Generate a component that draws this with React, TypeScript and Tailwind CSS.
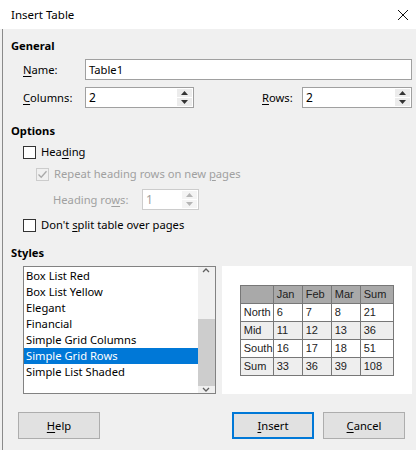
import React from "react"

const font = { fontFamily: '"Noto Sans", "Open Sans", sans-serif' }

function U({ children }: { children: React.ReactNode }) {
  return <span className="underline underline-offset-2">{children}</span>
}

function Arrow({ up, color }: { up?: boolean; color: string }) {
  return (
    <svg width="7" height="4" viewBox="0 0 7 4">
      <path d={up ? "M0 4 L3.5 0 L7 4 Z" : "M0 0 L3.5 4 L7 0 Z"} fill={color} />
    </svg>
  )
}

function Spin({ value, width, disabled }: { value: string; width: string; disabled?: boolean }) {
  const btn = disabled ? "bg-[#f4f4f4]" : "bg-[#ececec]"
  const c = disabled ? "#b5b5b5" : "#333"
  return (
    <div className={`flex h-[21px] items-stretch border bg-white ${disabled ? "border-[#cccccc]" : "border-[#a0a0a0]"} ${width}`}>
      <div className={`flex-1 pl-[3px] text-[12px] leading-[19px] ${disabled ? "text-[#a0a0a0]" : "text-black"}`}>{value}</div>
      <div className="my-[1px] mr-[1px] flex w-[15px] flex-col gap-[1px] leading-none">
        <div className={`flex h-[8px] items-center justify-center ${btn}`}><Arrow up color={c} /></div>
        <div className={`flex h-[8px] items-center justify-center ${btn}`}><Arrow color={c} /></div>
      </div>
    </div>
  )
}

function Check({ label, checked, disabled }: { label: React.ReactNode; checked?: boolean; disabled?: boolean }) {
  return (
    <div className={`flex items-center gap-[5px] ${disabled ? "text-[#a0a0a0]" : "text-black"}`}>
      <div className={`flex h-[13px] w-[13px] items-center justify-center border ${disabled ? "border-[#cccccc] bg-[#f0f0f0]" : "border-[#333] bg-white"}`}>
        {checked && (
          <svg width="11" height="11" viewBox="0 0 11 11">
            <path d="M1.5 5.5 L4.2 8.2 L9.5 2.2" fill="none" stroke="#a8a8a8" strokeWidth="1.3" />
          </svg>
        )}
      </div>
      <span>{label}</span>
    </div>
  )
}

const styles = [
  "Box List Red",
  "Box List Yellow",
  "Elegant",
  "Financial",
  "Simple Grid Columns",
  "Simple Grid Rows",
  "Simple List Shaded",
]

const rows = [
  ["North", "6", "7", "8", "21"],
  ["Mid", "11", "12", "13", "36"],
  ["South", "16", "17", "18", "51"],
  ["Sum", "33", "36", "39", "108"],
]

const colW = ["w-[33px]", "w-[29px]", "w-[29px]", "w-[29px]", "w-[33px]"]

export default function App() {
  return (
    <div className="h-[450px] w-[416px] overflow-hidden bg-[#f0f0f0] text-[11.2px] leading-[18px] text-black" style={font}>
      <div className="flex h-[29px] items-center justify-between bg-white pl-[11px] pr-[6px]">
        <span className="text-[11.5px]">Insert Table</span>
        <svg width="12" height="12" viewBox="0 0 12 12" className="mr-[1px]">
          <path d="M1 1 L11 11 M11 1 L1 11" stroke="#111" strokeWidth="1" />
        </svg>
      </div>

      <div className="ml-[2px] h-[421px] border-l border-[#8a8a8a] pl-[8px] pr-[4px]">
        <div className="pt-[8px] font-bold">General</div>
        <div className="mt-[4px] flex items-center pl-[12px]">
          <span className="w-[62px]"><U>N</U>ame:</span>
          <div className="h-[21px] flex-1 border border-[#a0a0a0] bg-white pl-[3px] leading-[19px]">Table1</div>
        </div>
        <div className="mt-[7px] flex items-center pl-[12px]">
          <span className="w-[62px]"><U>C</U>olumns:</span>
          <Spin value="2" width="w-[109px]" />
          <span className="ml-auto w-[40px]"><U>R</U>ows:</span>
          <Spin value="2" width="w-[110px]" />
        </div>

        <div className="mt-[14px] font-bold">Options</div>
        <div className="mt-[3px] pl-[12px]">
          <Check label={<>Hea<U>d</U>ing</>} />
        </div>
        <div className="mt-[4px] pl-[25px]">
          <Check checked disabled label={<>Repeat heading rows on new <U>p</U>ages</>} />
        </div>
        <div className="mt-[6px] flex items-center pl-[42px] text-[#a0a0a0]">
          <span className="w-[89px]">Heading ro<U>w</U>s:</span>
          <Spin value="1" width="w-[57px]" disabled />
        </div>
        <div className="mt-[6px] pl-[12px]">
          <Check label={<>Don't <U>s</U>plit table over pages</>} />
        </div>

        <div className="mt-[10px] font-bold">Styles</div>
        <div className="mt-[4px] flex pl-[12px]">
          <div className="flex h-[128px] w-[193px] border border-[#828282] bg-white">
            <div className="flex-1 pt-[1px]">
              {styles.map((s) => (
                <div
                  key={s}
                  className={`h-[16px] pl-[2px] leading-[16px] ${s === "Simple Grid Rows" ? "bg-[#0078d7] text-white" : ""}`}
                >
                  {s}
                </div>
              ))}
            </div>
            <div className="flex w-[17px] flex-col bg-[#f0f0f0]">
              <div className="flex h-[17px] items-center justify-center">
                <svg width="8" height="5" viewBox="0 0 8 5"><path d="M1 4 L4 1 L7 4" fill="none" stroke="#606060" strokeWidth="1.3" /></svg>
              </div>
              <div className="flex-1 pt-[44px]">
                <div className="h-[67px] bg-[#cdcdcd]" />
              </div>
              <div className="flex h-[17px] items-center justify-center">
                <svg width="8" height="5" viewBox="0 0 8 5"><path d="M1 1 L4 4 L7 1" fill="none" stroke="#606060" strokeWidth="1.3" /></svg>
              </div>
            </div>
          </div>

          <div className="ml-[6px] flex h-[128px] w-[191px] items-center justify-center bg-white">
            <div
              className="border-t border-l border-[#777] text-[11px] text-[#222]"
              style={{ fontFamily: '"Liberation Sans", Arial, sans-serif' }}
            >
              <div className="flex h-[18px] bg-[#a9a9a9]">
                {["", "Jan", "Feb", "Mar", "Sum"].map((h, i) => (
                  <div key={i} className={`${colW[i]} border-r border-b border-[#777] pl-[3px] leading-[17px]`}>{h}</div>
                ))}
              </div>
              {rows.map((r, ri) => (
                <div key={ri} className={`flex h-[18px] ${ri % 2 === 1 ? "bg-[#eeeeee]" : "bg-white"}`}>
                  {r.map((c, ci) => (
                    <div key={ci} className={`${colW[ci]} border-r border-b border-[#777] pl-[3px] leading-[17px]`}>{c}</div>
                  ))}
                </div>
              ))}
            </div>
          </div>
        </div>

        <div className="mt-[18px] flex items-center px-[7px]">
          <button className="h-[27px] w-[82px] border border-[#adadad] bg-[#e1e1e1]"><U>H</U>elp</button>
          <button className="ml-auto h-[27px] w-[82px] border-2 border-[#0078d7] bg-[#e1e1e1]"><U>I</U>nsert</button>
          <button className="ml-[9px] h-[27px] w-[82px] border border-[#adadad] bg-[#e1e1e1]"><U>C</U>ancel</button>
        </div>
      </div>
    </div>
  )
}
